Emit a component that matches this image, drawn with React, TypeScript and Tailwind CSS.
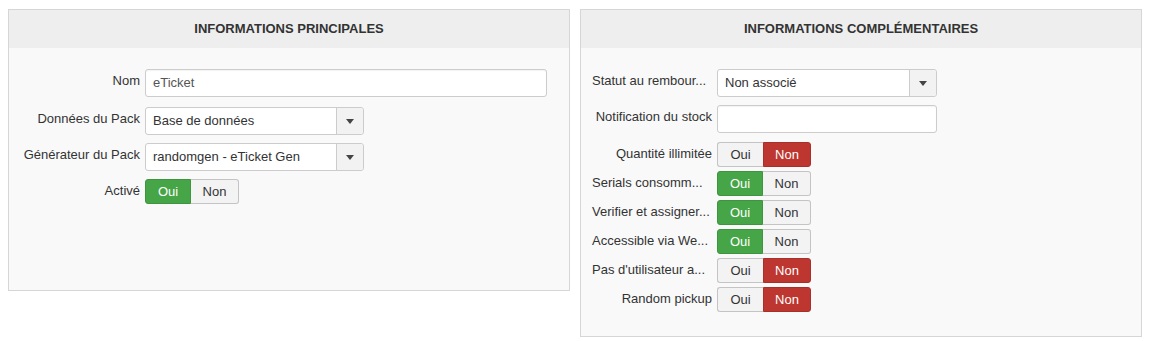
import type { FC, ReactNode } from "react";

const font = "font-['Liberation_Sans',Arial,sans-serif]";

const Caret = () => (
	<svg width="8" height="5" viewBox="0 0 8 5" className="fill-[#444]">
		<path d="M0 0h8L4 5z" />
	</svg>
);

const Row: FC<{ label: string; labelWidth: string; children: ReactNode; className?: string }> = ({
	label,
	labelWidth,
	children,
	className,
}) => {
	// cut labels fill the whole column, so they start at its left edge
	const cut = label.endsWith("...");
	return (
		<div className={`flex items-start gap-[5px] ${className ?? ""}`}>
			<div
				className={`${labelWidth} shrink-0 whitespace-nowrap pt-[3px] text-[13px] leading-[18px] ${cut ? "text-left" : "text-right"}`}
			>
				{label}
			</div>
			{children}
		</div>
	);
};

const TextInput: FC<{ value?: string; width: string }> = ({ value, width }) => (
	<div
		className={`${width} flex h-[28px] items-center rounded-[3px] border border-[#cccccc] bg-white px-[7px] text-[13px] text-[#555] shadow-[inset_0_1px_1px_rgba(0,0,0,0.05)]`}
	>
		{value}
	</div>
);

const Select: FC<{ value: string; width: string }> = ({ value, width }) => (
	<div className={`${width} flex h-[28px] rounded-[3px] border border-[#cccccc] bg-white text-[13px] text-[#333]`}>
		<div className="flex grow items-center truncate px-[7px]">{value}</div>
		<div className="flex w-[27px] shrink-0 items-center justify-center rounded-r-[3px] border-l border-[#cccccc] bg-[#f2f2f2]">
			<Caret />
		</div>
	</div>
);

const Toggle: FC<{ yes: boolean }> = ({ yes }) => (
	<div className="flex h-[25px] text-[13px]">
		<div
			className={
				yes
					? "flex w-[46px] items-center justify-center rounded-l-[3px] border border-[#3f953f] bg-[#46a546] text-white"
					: "flex w-[46px] items-center justify-center rounded-l-[3px] border border-[#c4c4c4] border-r-0 bg-[#f3f3f3] text-[#333]"
			}
		>
			Oui
		</div>
		<div
			className={
				yes
					? "flex w-[48px] items-center justify-center rounded-r-[3px] border border-[#c4c4c4] border-l-0 bg-[#f3f3f3] text-[#333]"
					: "flex w-[48px] items-center justify-center rounded-r-[3px] border border-[#a8302a] bg-[#bd362f] text-white"
			}
		>
			Non
		</div>
	</div>
);

const Panel: FC<{ title: string; children: ReactNode; bodyClass: string }> = ({ title, children, bodyClass }) => (
	<div className="w-[562px] border border-[#d6d6d6] bg-[#f9f9f9]">
		<div className="flex h-[38px] items-center justify-center bg-[#eeeeee] text-[13px] font-bold text-[#333]">
			{title}
		</div>
		<div className={bodyClass}>{children}</div>
	</div>
);

export default function App() {
	// labels are cut the way the page shows them
	const toggles: [string, boolean][] = [
		["Quantité illimitée", false],
		["Serials consomm...", true],
		["Verifier et assigner...", true],
		["Accessible via We...", true],
		["Pas d'utilisateur a...", false],
		["Random pickup", false],
	];

	return (
		<div className={`${font} flex items-start gap-[10px] bg-white pl-[8px] pt-[9px] text-[#333]`}>
			<Panel title="INFORMATIONS PRINCIPALES" bodyClass="h-[242px] px-[12px] pt-[21px]">
				<Row label="Nom" labelWidth="w-[119px]">
					<TextInput value="eTicket" width="w-[402px]" />
				</Row>
				<Row label="Données du Pack" labelWidth="w-[119px]" className="mt-[10px]">
					<Select value="Base de données" width="w-[219px]" />
				</Row>
				<Row label="Générateur du Pack" labelWidth="w-[119px]" className="mt-[8px]">
					<Select value="randomgen - eTicket Gen" width="w-[219px]" />
				</Row>
				<Row label="Activé" labelWidth="w-[119px]" className="mt-[8px]">
					<Toggle yes />
				</Row>
			</Panel>
			<Panel title="INFORMATIONS COMPLÉMENTAIRES" bodyClass="px-[11px] pb-[24px] pt-[21px]">
				<Row label="Statut au rembour..." labelWidth="w-[120px]">
					<Select value="Non associé" width="w-[220px]" />
				</Row>
				<Row label="Notification du stock" labelWidth="w-[120px]" className="mt-[8px]">
					<TextInput width="w-[220px]" />
				</Row>
				<div className="mt-[9px] flex flex-col gap-[4px]">
					{toggles.map(([label, yes]) => (
						<Row key={label} label={label} labelWidth="w-[120px]">
							<Toggle yes={yes} />
						</Row>
					))}
				</div>
			</Panel>
		</div>
	);
}
